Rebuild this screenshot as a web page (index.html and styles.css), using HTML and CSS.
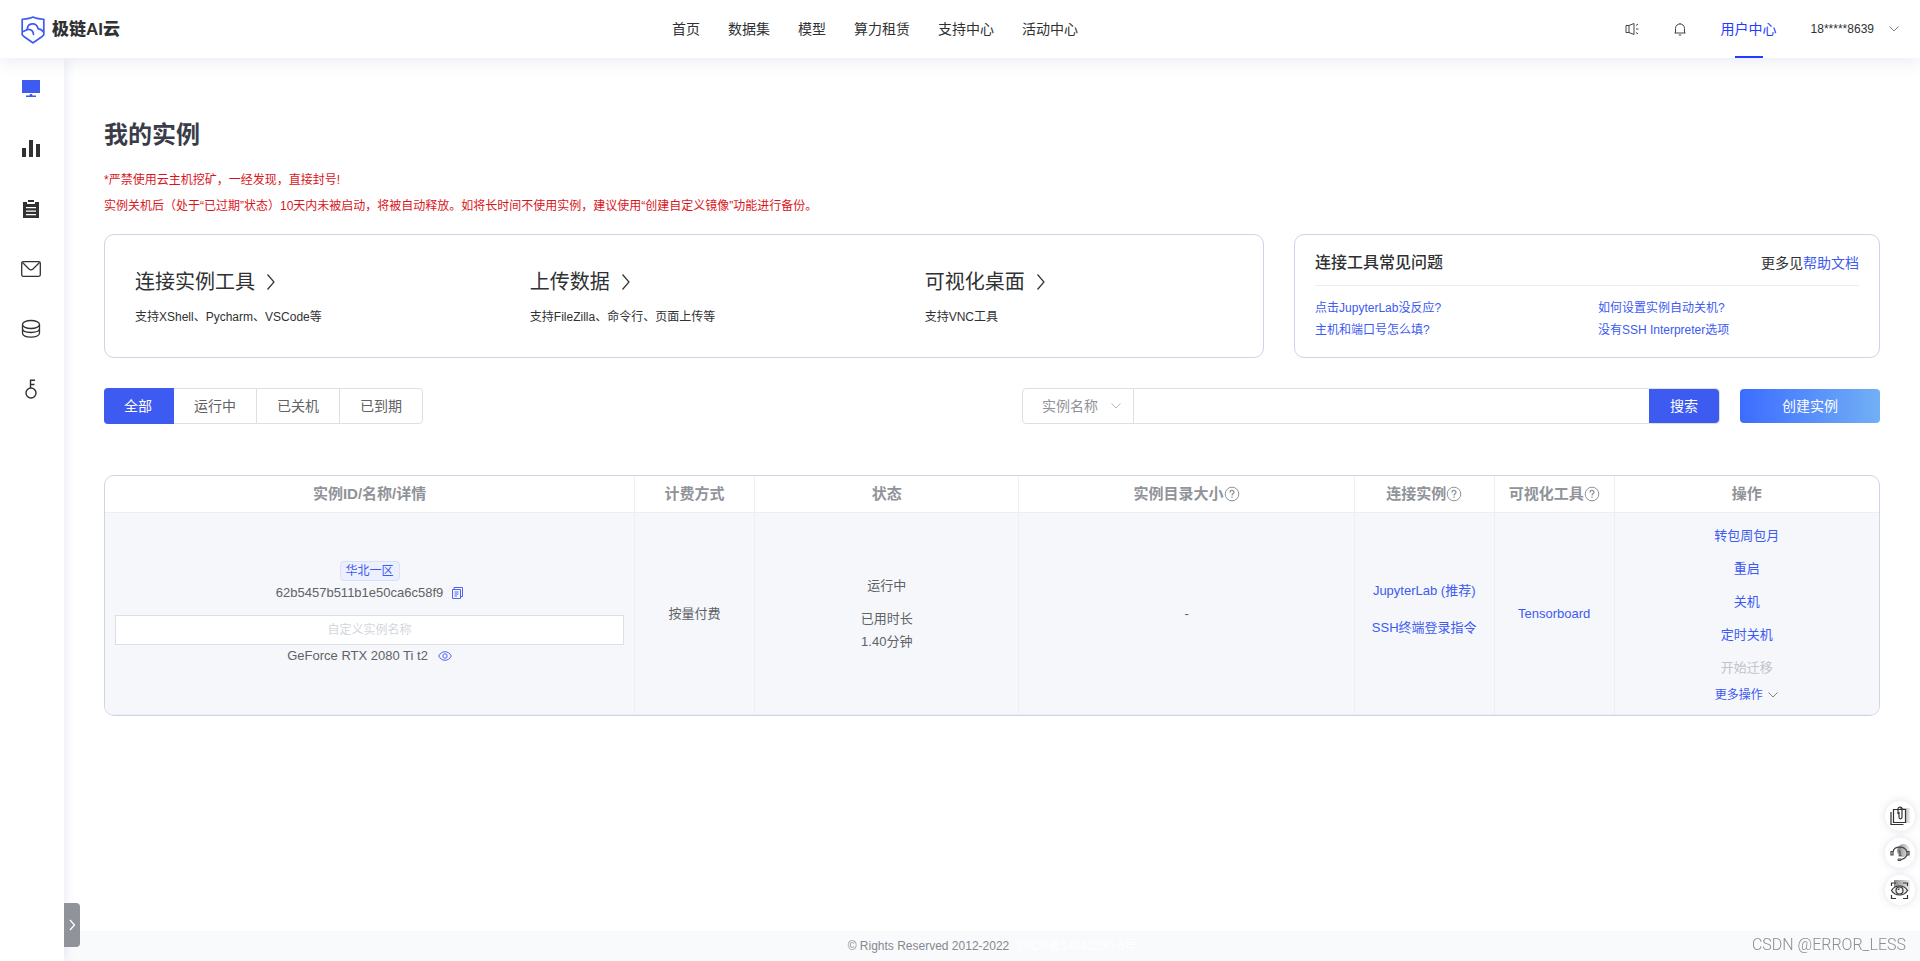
FILE: index.html
```html
<!DOCTYPE html>
<html lang="zh-CN">
<head>
<meta charset="utf-8">
<title>我的实例 - 极链AI云</title>
<link rel="stylesheet" href="styles.css">
</head>
<body>
<header class="header">
  <a class="logo" href="#">
    <svg width="24" height="28" viewBox="0 0 24 28" fill="none" stroke="#3d5af1" stroke-width="1.7" stroke-linejoin="round" stroke-linecap="round">
      <path d="M12 1C9 2.8 5.500 3 1.200 3.300V18.800C3.500 21.800 8.500 23.800 12 26.800C15.500 23.800 20.500 21.800 22.800 18.800V3.300C18.500 3 15 2.800 12 1Z"/>
      <path d="M1.800 15.500C4 15.500 4.200 13.800 7 13.300C10.500 13.200 12.300 15 12.500 18.500"/>
      <path d="M6.200 13.300C6.500 6.500 15.500 5.800 17.200 12.800C19.500 12.800 21 14 22.300 15.800"/>
    </svg>
    <span class="logo-text">极链AI云</span>
  </a>
  <nav class="nav">
    <a href="#">首页</a>
    <a href="#">数据集</a>
    <a href="#">模型</a>
    <a href="#">算力租赁</a>
    <a href="#">支持中心</a>
    <a href="#">活动中心</a>
  </nav>
  <div class="tools">
    <button class="icon-btn" type="button" aria-label="公告">
      <svg width="14" height="14" viewBox="0 0 14 14" fill="none" stroke="#444" stroke-width="1">
        <path d="M1 3.500H4L9 1.500V12.500L4 10.500H1ZM4 3.500V10.500M11 3.500L13 2M11 7H13.500M11 10.500L13 12"/>
      </svg>
    </button>
    <button class="icon-btn" type="button" aria-label="通知">
      <svg width="14" height="14" viewBox="0 0 14 14" fill="none" stroke="#444" stroke-width="1">
        <path d="M2.500 11V6.500C2.500 0.500 11.500 0.500 11.500 6.500V11M1.500 11H12.500M7 2V1M5.800 13H8.200"/>
      </svg>
    </button>
    <a class="user-center" href="#">用户中心</a>
    <button class="account" type="button">18*****8639
      <svg width="12" height="12" viewBox="0 0 12 12" fill="none" stroke="#808080"><path d="M1.500 3.500L6 8L10.500 3.500"/></svg>
    </button>
  </div>
</header>

<div class="body">
  <nav class="sidebar">
    <a href="#" aria-label="实例"><svg width="20" height="20" viewBox="0 0 20 20" fill="#3d5af1"><path d="M1 1H19V14H1ZM9 15H11L11.500 16.500H15V18H5V16.500H8.500Z"/></svg></a>
    <a href="#" aria-label="监控"><svg width="20" height="20" viewBox="0 0 20 20" fill="#303133"><path d="M1 9H5V18H1ZM8 1H12V18H8ZM15 5H19V18H15Z"/></svg></a>
    <a href="#" aria-label="任务"><svg width="20" height="20" viewBox="0 0 20 20" fill="#303133"><path fill-rule="evenodd" d="M7 1H13V3H7ZM2 3H6V5H14V3H18V19H2ZM5 8V9.300H15V8ZM5 11.500V12.800H15V11.500ZM5 15V16.300H15V15Z"/></svg></a>
    <a href="#" aria-label="消息"><svg width="20" height="20" viewBox="0 0 20 20" fill="none" stroke="#303133" stroke-width="1.300"><rect x="0.700" y="2.700" width="18.600" height="14.600" rx="1.500"/><path d="M1.500 3.500L8 10C9.300 11.200 10.700 11.200 12 10L18.500 3.500"/></svg></a>
    <a href="#" aria-label="存储"><svg width="20" height="20" viewBox="0 0 20 20" fill="none" stroke="#303133" stroke-width="1.300"><ellipse cx="10" cy="5.500" rx="8.500" ry="4"/><path d="M1.500 5.500V9.500C1.500 14.800 18.500 14.800 18.500 9.500V5.500M1.500 9.500V14C1.500 19.500 18.500 19.500 18.500 14V9.500"/></svg></a>
    <a href="#" aria-label="密钥"><svg width="20" height="20" viewBox="0 0 20 20" fill="none" stroke="#303133" stroke-width="1.400"><circle cx="10" cy="14" r="5"/><path d="M9.500 9V0.700M9 1.200H14M9.500 5.500H13.500"/></svg></a>
    <button class="expand" type="button" aria-label="展开菜单">
      <svg width="10" height="14" viewBox="0 0 10 14" fill="none" stroke="#fff" stroke-width="1.300"><path d="M3 2L7.500 7L3 12"/></svg>
    </button>
  </nav>

  <div class="page">
    <main class="main">
      <h1 class="title">我的实例</h1>
      <p class="notice">*严禁使用云主机挖矿，一经发现，直接封号!</p>
      <p class="notice">实例关机后（处于“已过期”状态）10天内未被启动，将被自动释放。如将长时间不使用实例，建议使用“创建自定义镜像”功能进行备份。</p>

      <div class="cards">
        <section class="card guides">
          <a class="guide" href="#">
            <span class="guide-title">连接实例工具 <svg width="12" height="18" viewBox="0 0 12 18" fill="none" stroke="currentColor" stroke-width="1.200"><path d="M2.500 1.500L9 9L2.500 16.500"/></svg></span>
            <span class="guide-text">支持XShell、Pycharm、VSCode等</span>
          </a>
          <a class="guide" href="#">
            <span class="guide-title">上传数据 <svg width="12" height="18" viewBox="0 0 12 18" fill="none" stroke="currentColor" stroke-width="1.200"><path d="M2.500 1.500L9 9L2.500 16.500"/></svg></span>
            <span class="guide-text">支持FileZilla、命令行、页面上传等</span>
          </a>
          <a class="guide" href="#">
            <span class="guide-title">可视化桌面 <svg width="12" height="18" viewBox="0 0 12 18" fill="none" stroke="currentColor" stroke-width="1.200"><path d="M2.500 1.500L9 9L2.500 16.500"/></svg></span>
            <span class="guide-text">支持VNC工具</span>
          </a>
        </section>
        <section class="card faq">
          <div class="faq-head">
            <h2>连接工具常见问题</h2>
            <span>更多见<a href="#">帮助文档</a></span>
          </div>
          <div class="faq-links">
            <a href="#">点击JupyterLab没反应?</a>
            <a href="#">如何设置实例自动关机?</a>
            <a href="#">主机和端口号怎么填?</a>
            <a href="#">没有SSH Interpreter选项</a>
          </div>
        </section>
      </div>

      <div class="toolbar">
        <div class="tabs">
          <button class="tab tab-active" type="button">全部</button>
          <button class="tab" type="button">运行中</button>
          <button class="tab" type="button">已关机</button>
          <button class="tab" type="button">已到期</button>
        </div>
        <form class="search">
          <div class="field">
            <select aria-label="搜索字段"><option>实例名称</option></select>
            <svg class="field-arrow" width="12" height="12" viewBox="0 0 12 12" fill="none" stroke="#b4b8c0"><path d="M1.500 3.500L6 8L10.500 3.500"/></svg>
          </div>
          <input type="text" aria-label="搜索内容">
          <button type="button">搜索</button>
        </form>
        <button class="create" type="button">创建实例</button>
      </div>

      <div class="table-box">
        <table class="table">
          <colgroup><col><col class="col-billing"><col class="col-status"><col class="col-size"><col class="col-connect"><col class="col-visual"><col class="col-actions"></colgroup>
          <thead>
            <tr>
              <th>实例ID/名称/详情</th>
              <th>计费方式</th>
              <th>状态</th>
              <th><span class="hint">实例目录大小<svg width="16" height="16" viewBox="0 0 16 16" fill="none" stroke="currentColor"><circle cx="8" cy="8" r="6.800"/><path stroke-width="1.300" d="M6 6.500C6 3.800 10 3.800 10 6.300C10 7.800 8 7.700 8 9.500M8 10.500V11.800"/></svg></span></th>
              <th><span class="hint">连接实例<svg width="16" height="16" viewBox="0 0 16 16" fill="none" stroke="currentColor"><circle cx="8" cy="8" r="6.800"/><path stroke-width="1.300" d="M6 6.500C6 3.800 10 3.800 10 6.300C10 7.800 8 7.700 8 9.500M8 10.500V11.800"/></svg></span></th>
              <th><span class="hint">可视化工具<svg width="16" height="16" viewBox="0 0 16 16" fill="none" stroke="currentColor"><circle cx="8" cy="8" r="6.800"/><path stroke-width="1.300" d="M6 6.500C6 3.800 10 3.800 10 6.300C10 7.800 8 7.700 8 9.500M8 10.500V11.800"/></svg></span></th>
              <th>操作</th>
            </tr>
          </thead>
          <tbody>
            <tr>
              <td>
                <div class="instance">
                  <span class="tag">华北一区</span>
                  <span class="line">62b5457b511b1e50ca6c58f9
                    <button class="icon-btn" type="button" aria-label="复制"><svg width="12" height="14" viewBox="0 0 12 14" fill="none" stroke="#4c64f0"><path d="M3 3V1.500H11.500V10.500H9.500M1.500 3.500H9.500V12.500H1.500ZM3.500 6H7.500M3.500 8H7.500M3.500 10H6"/></svg></button>
                  </span>
                  <input class="name" type="text" placeholder="自定义实例名称" aria-label="自定义实例名称">
                  <span class="line line-gpu">GeForce RTX 2080 Ti t2
                    <button class="icon-btn" type="button" aria-label="查看"><svg width="14" height="12" viewBox="0 0 14 12" fill="none" stroke="#4c64f0"><path d="M0.700 6C3.500 0.300 10.500 0.300 13.300 6C10.500 11.700 3.500 11.700 0.700 6Z"/><circle cx="7" cy="6" r="2.200"/></svg></button>
                  </span>
                </div>
              </td>
              <td>按量付费</td>
              <td>
                <div class="status"><p>运行中</p><p>已用时长<br>1.40分钟</p></div>
              </td>
              <td>-</td>
              <td><div class="connect"><a href="#">JupyterLab (推荐)</a><a href="#">SSH终端登录指令</a></div></td>
              <td><a href="#">Tensorboard</a></td>
              <td class="actions-cell">
                <div class="actions">
                  <button type="button">转包周包月</button>
                  <button type="button">重启</button>
                  <button type="button">关机</button>
                  <button type="button">定时关机</button>
                  <button type="button" disabled>开始迁移</button>
                  <button class="more" type="button">更多操作 <svg width="12" height="12" viewBox="0 0 12 12" fill="none" stroke="#808080"><path d="M1.500 3.500L6 8L10.500 3.500"/></svg></button>
                </div>
              </td>
            </tr>
          </tbody>
        </table>
      </div>
    </main>
    <footer class="footer"><span>© Rights Reserved 2012-2022</span><a href="#">沪ICP备14042830-6号</a></footer>
  </div>
</div>

<aside class="floating">
  <button type="button" aria-label="资料">
    <svg width="20" height="20" viewBox="0 0 20 20" fill="none" stroke="#333" stroke-width="1.200"><defs><linearGradient id="shade"><stop stop-color="#888"/><stop offset="1" stop-color="#eee"/></linearGradient></defs><path stroke="none" fill="url(#shade)" d="M10 2H20V17H10Z"/><path fill="#fff" d="M3.500 3.500H15.500V16.500H3.500Z"/><path d="M1 6V18.500H13.500M8 8V3C8 0.500 12 0.500 12 3V11C12 13.500 9 13.500 9 11V6"/></svg>
  </button>
  <button type="button" aria-label="客服">
    <svg width="20" height="20" viewBox="0 0 20 20" fill="none" stroke="#444" stroke-width="1.200"><circle cx="13.500" cy="7.500" r="6.500" fill="url(#shade)" stroke="none"/><path d="M3 9C4 2.500 15 2.500 17 9M17 12C16 14.500 14 16 11 16.500" /><path d="M1 8.500H3V12H1ZM17 8.500H19V12H17Z"/><path stroke-width="1" d="M8.500 8H10V12.500M8.500 12.800H11.500M10 5.500V6.500M8 16H11V17.500H8Z"/></svg>
  </button>
  <button type="button" aria-label="关注">
    <svg width="20" height="20" viewBox="0 0 20 20" fill="none" stroke="#333" stroke-width="1.200"><path fill="url(#shade)" stroke="none" d="M4 0H20V11H4Z"/><path d="M1.500 6V3H6M13 3H17.500V6M1.500 15V18.500H6M13 18.500H17.500V15"/><path fill="#eee" d="M1.500 10.500C5 4.500 14 4.500 17.500 10.500C14 16.500 5 16.500 1.500 10.500Z"/><circle cx="9.500" cy="10.500" r="3.500"/><path d="M8 10C8 9 8.500 8.800 9.500 8.800"/></svg>
  </button>
</aside>
<div class="watermark">CSDN @ERROR_LESS</div>
</body>
</html>
```

FILE: styles.css
```css
* { box-sizing: border-box; }

body {
  margin: 0;
  min-height: 100vh;
  display: flex;
  flex-direction: column;
  background: #fff;
  color: #303133;
  font: 14px/20px "Liberation Sans", "Noto Sans CJK SC", sans-serif;
}

a { color: #3d5af1; text-decoration: none; }
h1, h2, p { margin: 0; }
button, input, select { font: inherit; }
button { padding: 0; border: 0; background: none; color: inherit; cursor: pointer; }
svg { display: block; flex: none; }

/* Header */
.header {
  position: relative;
  z-index: 2;
  display: flex;
  align-items: center;
  height: 58px;
  background: #fff;
  box-shadow: 0 4px 16px rgba(60, 80, 140, 0.1);
}
.logo {
  display: flex;
  align-items: center;
  gap: 7px;
  width: 35%;
  padding: 1px 0 0 21px;
}
.logo-text { color: #303133; font-size: 17px; font-weight: 900; }
.nav { display: flex; gap: 28px; }
.nav a { color: #303133; white-space: nowrap; }
.tools {
  display: flex;
  align-items: center;
  align-self: stretch;
  margin-left: auto;
  padding-right: 20px;
}
.tools .icon-btn { margin-right: 34px; }
.user-center {
  display: flex;
  align-items: center;
  align-self: stretch;
  margin-right: 34px;
  color: #1f3cff;
  background: linear-gradient(#1f3cff, #1f3cff) center bottom / 28px 2px no-repeat;
}
.account { display: flex; align-items: center; gap: 14px; font-size: 12px; }

/* Sidebar */
.body { display: flex; flex: 1; }
.sidebar {
  position: relative;
  z-index: 1;
  flex: none;
  width: 64px;
  padding: 1px 2px 0 0;
  background: #fff;
  box-shadow: 2px 0 10px rgba(60, 80, 140, 0.1);
}
.sidebar a { display: flex; align-items: center; justify-content: center; height: 60px; }
.expand {
  position: absolute;
  left: 100%;
  bottom: 14px;
  display: flex;
  align-items: center;
  justify-content: center;
  width: 16px;
  height: 44px;
  border-radius: 0 4px 4px 0;
  background: #909399;
}

/* Page */
.page { display: flex; flex: 1; flex-direction: column; min-width: 0; }
.main { flex: 1; padding: 59px 40px 40px; }
.title { margin-bottom: 14px; color: #3b3c4a; font-size: 24px; line-height: 36px; }
.notice { color: #d9151b; font-size: 12px; line-height: 26px; }

.cards { display: grid; grid-template-columns: 99fr 50fr; gap: 30px; margin-top: 15px; }
.card { border: 1px solid #cfd3e3; border-radius: 10px; }
.guides { display: grid; grid-template-columns: 35fr 35fr 30fr; padding: 33px 0 30px 30px; }
.guide { display: flex; flex-direction: column; gap: 11px; color: #303133; }
.guide-title { display: flex; align-items: center; gap: 10px; font-size: 20px; line-height: 28px; }
.guide-text { font-size: 12px; }
.faq { padding: 16px 20px; }
.faq-head {
  display: flex;
  align-items: center;
  justify-content: space-between;
  padding-bottom: 10px;
  border-bottom: 1px solid #ebecf0;
  line-height: 24px;
}
.faq-head h2 { font-size: 16px; font-weight: 500; }
.faq-links {
  display: grid;
  grid-template-columns: 52fr 48fr;
  margin-top: 11px;
  font-size: 12px;
  line-height: 22px;
}

/* Toolbar */
.toolbar { display: flex; align-items: center; margin: 30px 0 51px; }
.tabs { display: flex; height: 36px; border: 1px solid #dcdfe6; border-radius: 4px; }
.tab { padding: 0 20px; border-right: 1px solid #dcdfe6; color: #606266; }
.tab:last-child { border-right: 0; }
.tab-active {
  margin: -1px 0 -1px -1px;
  padding: 0 21px 0 20px;
  border-color: #3d5af1;
  border-radius: 4px 0 0 4px;
  background: #3d5af1;
  color: #fff;
}
.search {
  display: flex;
  width: 698px;
  height: 36px;
  margin-left: auto;
  border: 1px solid #dcdfe6;
  border-radius: 4px;
}
.field { position: relative; width: 111px; border-right: 1px solid #dcdfe6; }
.field select {
  width: 100%;
  height: 100%;
  padding: 0 30px 0 19px;
  border: 0;
  background: none;
  color: #909399;
  appearance: none;
}
.field-arrow { position: absolute; right: 11px; top: 11px; pointer-events: none; }
.search input { flex: 1; min-width: 0; border: 0; background: none; }
.search button { width: 70px; border-radius: 0 4px 4px 0; background: #3d5af1; color: #fff; }
.create {
  width: 140px;
  height: 34px;
  margin-left: 20px;
  border-radius: 4px;
  background: linear-gradient(90deg, #3c6cff, #72b0f5);
  color: #fff;
}

/* Instance table */
.table-box { overflow: hidden; border: 1px solid #cfd3e3; border-radius: 10px; }
.table { width: 100%; border-collapse: separate; border-spacing: 0; table-layout: fixed; text-align: center; }
.col-billing, .col-visual { width: 120px; }
.col-connect { width: 140px; }
.col-status, .col-actions { width: 14.9%; }
.col-size { width: 18.9%; }
.table th, .table td { border-right: 1px solid #ebeef5; border-bottom: 1px solid #ebeef5; }
.table th:last-child, .table td:last-child { border-right: 0; }
.table th { height: 37px; padding: 0; color: #909399; font-size: 15px; font-weight: 700; }
.table td { padding: 6px 10px; background: #f5f7fb; color: #606266; font-size: 13px; }
.hint { display: flex; align-items: center; justify-content: center; }
.instance { display: flex; flex-direction: column; align-items: center; }
.tag {
  margin-bottom: 2px;
  padding: 0 5px;
  border: 1px solid #d8defc;
  border-radius: 4px;
  background: #eceffe;
  color: #3d5af1;
  font-size: 12px;
  line-height: 18px;
}
.line { display: flex; align-items: center; gap: 8px; }
.line-gpu { gap: 10px; }
.name {
  width: 100%;
  height: 30px;
  margin: 12px 0 1px;
  border: 1px solid #dcdfe6;
  background: #fff;
  color: #606266;
  font-size: 12px;
  text-align: center;
}
.name::placeholder { color: #d3d6dd; }
.status { display: flex; flex-direction: column; gap: 10px; line-height: 23px; }
.connect { display: flex; flex-direction: column; gap: 17px; padding-bottom: 8px; white-space: nowrap; }
.table .actions-cell { padding: 6px 0 8px; }
.actions { display: flex; flex-direction: column; align-items: center; color: #3d5af1; line-height: 33px; }
.actions button:disabled { color: #c0c4cc; }
.actions .more { display: flex; align-items: center; gap: 4px; font-size: 12px; line-height: 22px; }

/* Footer */
.footer {
  display: flex;
  justify-content: center;
  gap: 7px;
  background: #f9fafc;
  color: #85888f;
  font-size: 12px;
  line-height: 30px;
}
.footer a { color: #fff; }

/* Floating elements */
.floating { position: fixed; z-index: 3; right: 5px; bottom: 56px; display: flex; flex-direction: column; gap: 7px; }
.floating button {
  display: flex;
  align-items: center;
  justify-content: center;
  width: 30px;
  height: 30px;
  border-radius: 50%;
  background: #fff;
  box-shadow: 0 0 8px rgba(80, 90, 140, 0.18);
}
.watermark {
  position: fixed;
  z-index: 3;
  right: 14px;
  bottom: 6px;
  color: #8c8e93;
  font-family: Roboto, "Liberation Sans", sans-serif;
  font-size: 16px;
  font-weight: 300;
}
```
